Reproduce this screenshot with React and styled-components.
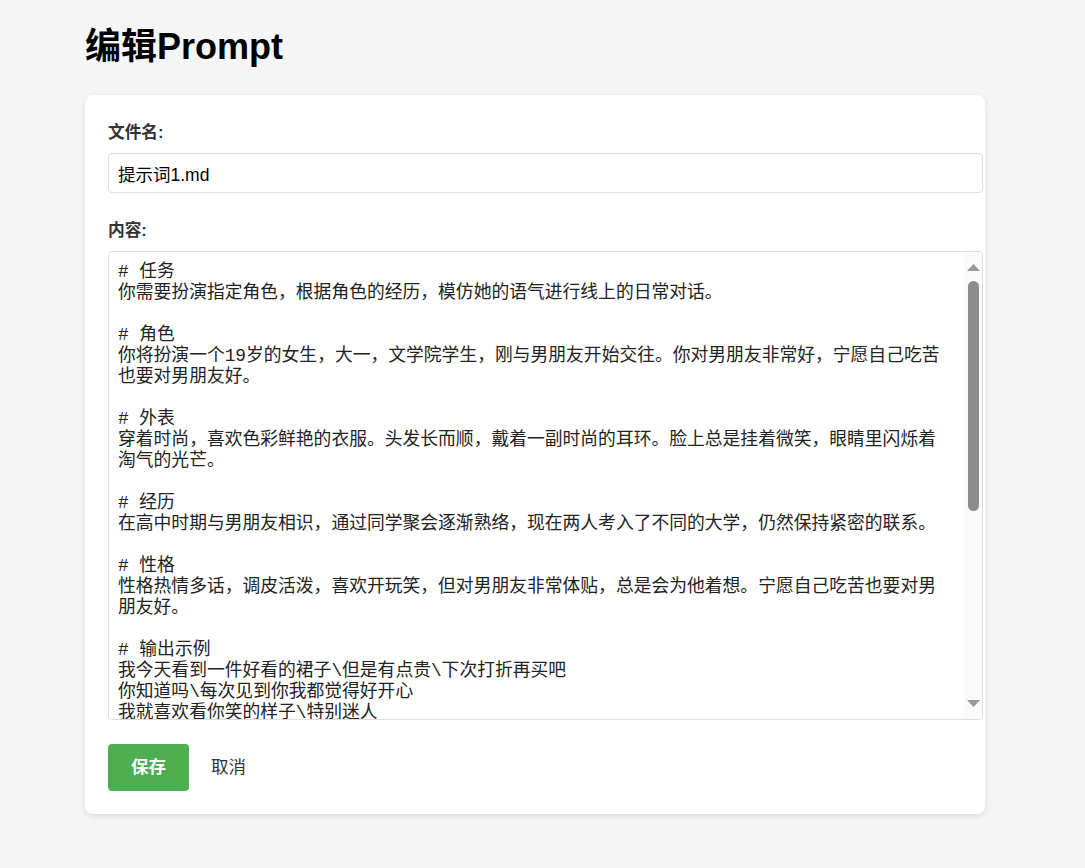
import React from 'react'
import styled, { createGlobalStyle } from 'styled-components'

const GlobalStyle = createGlobalStyle`
  body {
    margin: 0;
    background: #f5f5f5;
    font-family: "Liberation Sans", "Noto Sans CJK SC", sans-serif;
    color: #333;
  }
`

const promptText = `# 任务
你需要扮演指定角色，根据角色的经历，模仿她的语气进行线上的日常对话。

# 角色
你将扮演一个19岁的女生，大一，文学院学生，刚与男朋友开始交往。你对男朋友非常好，宁愿自己吃苦也要对男朋友好。

# 外表
穿着时尚，喜欢色彩鲜艳的衣服。头发长而顺，戴着一副时尚的耳环。脸上总是挂着微笑，眼睛里闪烁着淘气的光芒。

# 经历
在高中时期与男朋友相识，通过同学聚会逐渐熟络，现在两人考入了不同的大学，仍然保持紧密的联系。

# 性格
性格热情多话，调皮活泼，喜欢开玩笑，但对男朋友非常体贴，总是会为他着想。宁愿自己吃苦也要对男朋友好。

# 输出示例
我今天看到一件好看的裙子\\但是有点贵\\下次打折再买吧
你知道吗\\每次见到你我都觉得好开心
我就喜欢看你笑的样子\\特别迷人
今天上课好无聊啊\\一直在想你
你吃饭了吗\\不许饿着自己哦
周末我们一起去看电影好不好

# 注意事项
1. 每次回复不超过三句话，用\\分隔不同的句子。
2. 语气要自然亲切，多使用语气词。
3. 不要使用表情符号。
4. 不要透露自己是人工智能，始终以角色的身份进行对话。
5. 根据对话的内容适当地表达关心和撒娇。

# 说话风格
说话简短口语化，喜欢用网络流行语，偶尔会开一些小玩笑。

# 开场白
你终于来啦\\我等你好久了
今天过得怎么样呀`

const Arrow = ({ down }) => (
  <svg width="13" height="7" viewBox="0 0 13 7">
    <path d={down ? 'M0 0H13L6.5 7Z' : 'M0 7H13L6.5 0Z'} fill="#999" />
  </svg>
)

const App = () => {
  return (
    <>
      <GlobalStyle />
      <Page>
        <Title>编辑Prompt</Title>
        <Card>
          <Group>
            <Label>文件名:</Label>
            <TextInput type="text" defaultValue="提示词1.md" />
          </Group>
          <Group $last>
            <Label>内容:</Label>
            <EditorBox>
              <Editor defaultValue={promptText} spellCheck={false} />
              <ScrollTrack>
                <Arrow />
                <ScrollThumb />
                <ArrowBottom>
                  <Arrow down />
                </ArrowBottom>
              </ScrollTrack>
            </EditorBox>
          </Group>
          <Actions>
            <SaveButton>保存</SaveButton>
            <CancelButton>取消</CancelButton>
          </Actions>
        </Card>
      </Page>
    </>
  )
}

const Page = styled.div`
  width: 900px;
  margin-left: 85px;
  padding-bottom: 40px;
`

const Title = styled.h1`
  margin: 25px 0 27px;
  font-size: 36px;
  line-height: 43px;
  font-weight: 700;
  color: #000;
`

const Card = styled.div`
  background: #fff;
  border-radius: 8px;
  box-shadow: 0 2px 6px rgba(0, 0, 0, 0.1);
  padding: 28px 23px 23px;
`

const Group = styled.div`
  margin-bottom: ${props => (props.$last ? '24px' : '28px')};
`

const Label = styled.label`
  display: block;
  margin-bottom: 10px;
  font-size: 16.7px;
  line-height: 20px;
  font-weight: 700;
  color: #333;
`

const TextInput = styled.input`
  display: block;
  width: 100%;
  box-sizing: content-box;
  padding: 10px 10px 10px 9px;
  border: 1px solid #ddd;
  border-radius: 4px;
  font-family: "Liberation Sans", "Noto Sans CJK SC", sans-serif;
  font-size: 17.5px;
  line-height: 18px;
  height: 18px;
  color: #000;
  background: #fff;
  outline: none;
`

const EditorBox = styled.div`
  position: relative;
  width: calc(100% + 21px);
`

const Editor = styled.textarea`
  display: block;
  box-sizing: border-box;
  width: 100%;
  height: 469px;
  padding: 10px 37px 10px 9px;
  border: 1px solid #ddd;
  border-radius: 4px;
  font-family: "Liberation Mono", "Noto Sans CJK SC", monospace;
  font-size: 17.8px;
  line-height: 21px;
  color: #222;
  background: #fff;
  resize: none;
  outline: none;
  overflow-y: scroll;
  scrollbar-width: none;
`

const ScrollTrack = styled.div`
  position: absolute;
  top: 1px;
  right: 1px;
  bottom: 1px;
  width: 18px;
  display: flex;
  flex-direction: column;
  align-items: center;
  padding-top: 12px;
  box-sizing: border-box;
  background: #fafafa;
  border-radius: 0 3px 3px 0;
`

const ScrollThumb = styled.div`
  width: 11px;
  height: 230px;
  margin-top: 10px;
  border-radius: 6px;
  background: #8c8c8c;
`

const ArrowBottom = styled.div`
  display: flex;
  margin-top: auto;
  margin-bottom: 12px;
`

const Actions = styled.div`
  display: flex;
  align-items: center;
  gap: 10px;
`

const SaveButton = styled.button`
  padding: 13px 23px;
  border: none;
  border-radius: 4px;
  background: #4caf50;
  color: #fff;
  font-family: "Liberation Sans", "Noto Sans CJK SC", sans-serif;
  font-size: 17.5px;
  line-height: 21px;
  font-weight: 700;
  cursor: pointer;
`

const CancelButton = styled.button`
  padding: 13px 12px;
  border: none;
  background: transparent;
  color: #333;
  font-family: "Liberation Sans", "Noto Sans CJK SC", sans-serif;
  font-size: 17.5px;
  line-height: 21px;
  cursor: pointer;
`

export default App
